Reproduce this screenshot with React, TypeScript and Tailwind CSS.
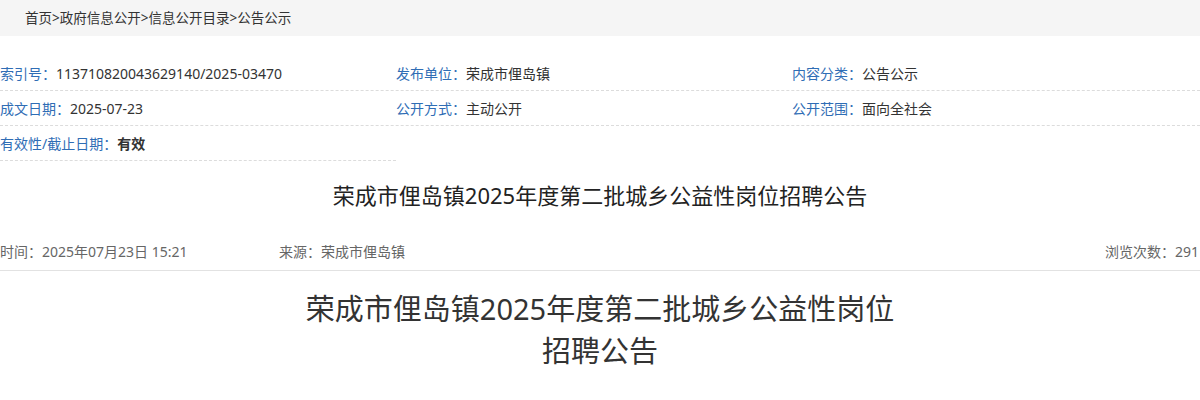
import React from 'react';

const font = { fontFamily: '"Noto Sans", "Noto Sans CJK SC", sans-serif' };

interface InfoItem {
    label: string;
    value: string;
    bold?: boolean;
}

const rows: InfoItem[][] = [
    [
        { label: '索引号：', value: '113710820043629140/2025-03470' },
        { label: '发布单位：', value: '荣成市俚岛镇' },
        { label: '内容分类：', value: '公告公示' },
    ],
    [
        { label: '成文日期：', value: '2025-07-23' },
        { label: '公开方式：', value: '主动公开' },
        { label: '公开范围：', value: '面向全社会' },
    ],
];

const Cell = ({ item }: { item: InfoItem }) => (
    <div className="flex items-center h-[34px] text-[14px] whitespace-nowrap">
        <span className="text-[#2f6db5]">{item.label}</span>
        <span className={item.bold ? 'text-[#333] font-bold' : 'text-[#333]'}>{item.value}</span>
    </div>
);

const App = () => {
    return (
        <div className="w-[1200px] h-[400px] bg-white overflow-hidden" style={font}>
            {/* breadcrumb */}
            <div className="h-[36px] bg-[#f5f5f5] flex items-center pl-[25px] text-[13.5px] text-[#333]">
                首页&gt;政府信息公开&gt;信息公开目录&gt;公告公示
            </div>

            <div className="pt-[20px]">
                {rows.map((row, i) => (
                    <div key={i} className="grid grid-cols-[396px_396px_1fr] border-b border-dashed border-[#dcdcdc]">
                        {row.map(item => (
                            <Cell key={item.label} item={item} />
                        ))}
                    </div>
                ))}
                <div className="w-[396px] border-b border-dashed border-[#dcdcdc]">
                    <Cell item={{ label: '有效性/截止日期：', value: '有效', bold: true }} />
                </div>
            </div>

            <h1 className="text-center text-[22px] text-[#222] leading-[30px] mt-[19px]">
                荣成市俚岛镇2025年度第二批城乡公益性岗位招聘公告
            </h1>

            <div className="mt-[23px] h-[38px] flex items-center text-[14px] text-[#666] border-b border-[#e2e2e2]">
                <span className="w-[279px]">时间：2025年07月23日 15:21</span>
                <span>来源：荣成市俚岛镇</span>
                <span className="ml-auto pr-[1px]">浏览次数：291</span>
            </div>

            <div className="mx-auto w-[600px] mt-[17px] text-center text-[29px] leading-[42px] text-[#333]">
                荣成市俚岛镇2025年度第二批城乡公益性岗位招聘公告
            </div>
        </div>
    );
};

export default App;
